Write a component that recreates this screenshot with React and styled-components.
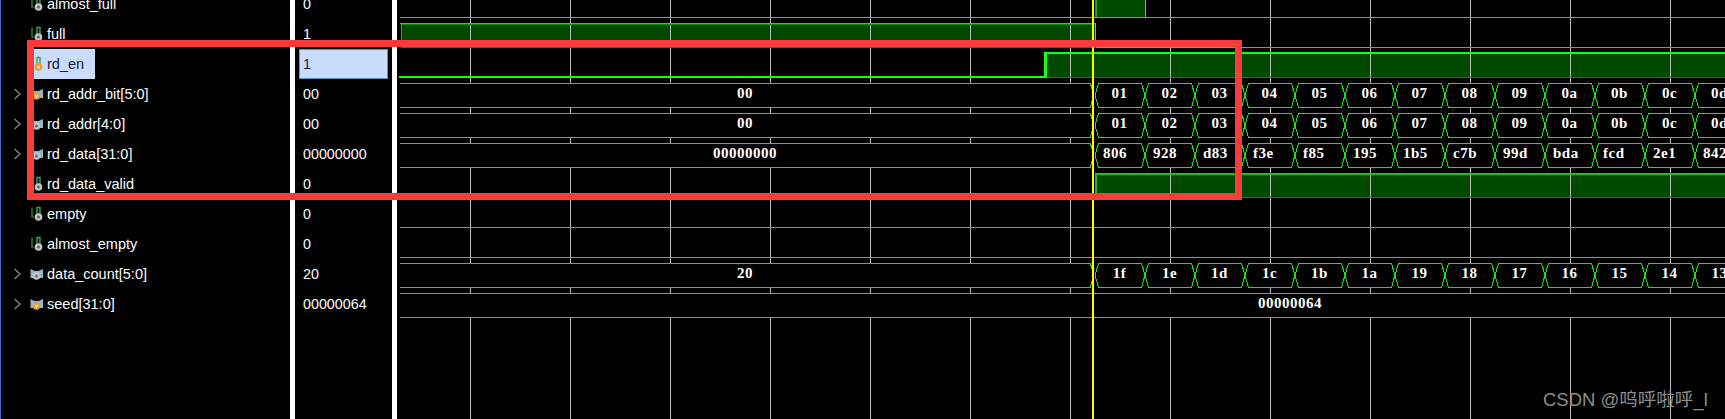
import React from 'react';
import styled, { createGlobalStyle } from 'styled-components';

const GlobalStyle = createGlobalStyle`
    html, body {
        margin: 0;
        padding: 0;
        background: #000;
    }
`;

const Page = styled.div`
    position: relative;
    display: flex;
    width: 1725px;
    height: 419px;
    overflow: hidden;
    background: #000;
    font-family: 'Liberation Sans', Arial, sans-serif;
    font-size: 14.5px;
`;

const NameColumn = styled.div`
    width: 289px;
    border-left: 1px solid #3f6fc0;
    margin-top: -11px;
    height: 430px;
`;

const ValueColumn = styled.div`
    width: 97px;
    margin-top: -11px;
    height: 430px;
    font-size: 14.3px;
`;

const Divider = styled.div`
    width: 5px;
    background: #fff;
`;

const NameRow = styled.div`
    display: flex;
    align-items: stretch;
    height: 30px;
`;

const Expander = styled.div`
    width: 29px;
    flex: none;
    display: flex;
    align-items: center;
    padding-left: 12px;
    box-sizing: border-box;
`;

const NameCell = styled.div`
    display: flex;
    align-items: center;
    padding-right: 11px;
    color: ${(p) => (p.$selected ? '#10203a' : '#fbfdff')};
    background: ${(p) => (p.$selected ? '#cbdcfb' : 'transparent')};
`;

const IconSlot = styled.div`
    width: 17px;
    height: 16px;
    flex: none;
    display: flex;
    align-items: center;
`;

const ValueRow = styled.div`
    height: 30px;
    padding: 0 4px;
    display: flex;
    align-items: center;
`;

const ValueText = styled.div`
    flex: 1;
    align-self: stretch;
    display: flex;
    align-items: center;
    padding-left: 3px;
    box-sizing: border-box;
    color: ${(p) => (p.$selected ? '#10203a' : '#fbfdff')};
    background: ${(p) => (p.$selected ? '#c9dcff' : 'transparent')};
    border: 1px solid ${(p) => (p.$selected ? '#5b95cf' : 'transparent')};
`;

const WavePanel = styled.div`
    flex: 1;
    overflow: hidden;
`;

const WaveSvg = styled.svg`
    display: block;
    shape-rendering: crispEdges;
`;

const BusLabel = styled.text`
    font-family: 'Liberation Serif', 'Times New Roman', serif;
    font-weight: 700;
    font-size: 15px;
    letter-spacing: 0.5px;
    fill: #fff;
    text-anchor: ${(p) => p.$anchor || 'middle'};
`;

const RedFrame = styled.div`
    position: absolute;
    left: 27px;
    top: 40px;
    width: 1215px;
    height: 160px;
    box-sizing: border-box;
    border: 7px solid #fb3a3a;
`;

const Watermark = styled.div`
    position: absolute;
    left: 1543px;
    top: 389px;
    font-family: 'Liberation Sans', 'Noto Sans CJK SC', sans-serif;
    font-size: 18.5px;
    line-height: 22px;
    color: #8c8c8c;
    white-space: nowrap;
`;

const Chevron = () => (
    <svg width="9" height="12" viewBox="0 0 9 12">
        <path d="M1.5 1 L7 6 L1.5 11" fill="none" stroke="#7f7f7f" strokeWidth="1.4" />
    </svg>
);

const Badge = ({ cx, cy, kind }) =>
    kind === 'v' ? (
        <g>
            <circle cx={cx} cy={cy} r="3.8" fill="#ee9a2c" />
            <path d={`M${cx - 1.4} ${cy - 1.3} L${cx} ${cy + 1.6} L${cx + 1.4} ${cy - 1.3}`} fill="none" stroke="#fff" strokeWidth="0.9" />
        </g>
    ) : (
        <g>
            <circle cx={cx} cy={cy} r="3.8" fill="#c4c4c4" />
            <circle cx={cx} cy={cy} r="1.5" fill="#6a6a6a" />
        </g>
    );

const ScalarIcon = ({ kind }) => (
    <svg width="14" height="16" viewBox="0 0 14 16">
        <path d="M2 1.5 V11 H4" fill="none" stroke="#1f7a33" strokeWidth="1.6" />
        <path d="M7 9 V1.5 H10 V9" fill="none" stroke="#35a84a" strokeWidth="1.4" />
        <Badge cx={8.5} cy={11} kind={kind} />
    </svg>
);

const BusIcon = ({ kind }) => (
    <svg width="14" height="16" viewBox="0 0 14 16">
        <path d="M0.5 3 L4.5 5 L8.5 5 L13 3 L13 12 L0.5 12 Z" fill="#8fb8d0" />
        <Badge cx={6.5} cy={10} kind={kind} />
    </svg>
);

const signals = [
    { name: 'almost_full', value: '0' },
    { name: 'full', value: '1' },
    { name: 'rd_en', value: '1', badge: 'v', selected: true },
    { name: 'rd_addr_bit[5:0]', value: '00', bus: true, badge: 'v' },
    { name: 'rd_addr[4:0]', value: '00', bus: true },
    { name: 'rd_data[31:0]', value: '00000000', bus: true },
    { name: 'rd_data_valid', value: '0' },
    { name: 'empty', value: '0' },
    { name: 'almost_empty', value: '0' },
    { name: 'data_count[5:0]', value: '20', bus: true },
    { name: 'seed[31:0]', value: '00000064', bus: true, badge: 'v' },
];

// the panel starts at x=397, wave coordinates below are page x
const PANEL_X = 397;
const GREEN = '#14e614';
const BRIGHT = '#12ff12';
const DIM = '#0b8a0b';
const FILL = '#004a00';
const EDGE = 1095; // first value change
const END = 1760;

const rowTop = (i) => -7 + 30 * i; // top line of signal i
const gridXs = [470, 570, 670, 770, 870, 970, 1070, 1170, 1270, 1370, 1470, 1570, 1670];

const addrCells = ['01', '02', '03', '04', '05', '06', '07', '08', '09', '0a', '0b', '0c', '0d'];
const dataCells = ['806', '928', 'd83', 'f3e', 'f85', '195', '1b5', 'c7b', '99d', 'bda', 'fcd', '2e1', '842'];
const countCells = ['1f', '1e', '1d', '1c', '1b', '1a', '19', '18', '17', '16', '15', '14', '13'];

const Hline = ({ x1, x2, y, color = GREEN, h = 1 }) => (
    <rect x={x1} y={y} width={x2 - x1} height={h} fill={color} />
);

const BusRow = ({ row, first, cells, truncated }) => {
    const top = rowTop(row);
    const mid = top + 12;
    const bottom = top + 24;
    return (
        <g>
            <rect x={400} y={top} width={END - 400} height={24} fill="#000" />
            <path
                d={`M400 ${top + 0.5} H1090.5 L1093.5 ${mid} L1090.5 ${bottom + 0.5} H400`}
                fill="none"
                stroke={GREEN}
            />
            <BusLabel x={745} y={mid + 3}>{first}</BusLabel>
            {cells.map((label, i) => {
                const x0 = EDGE + 50 * i;
                return (
                    <g key={label}>
                        <path
                            d={`M${x0} ${mid} L${x0 + 3.5} ${top + 0.5} H${x0 + 46.5} L${x0 + 50} ${mid} L${x0 + 46.5} ${bottom + 0.5} H${x0 + 3.5} Z`}
                            fill="none"
                            stroke={GREEN}
                        />
                        {truncated ? (
                            <BusLabel x={x0 + 8} y={mid + 3} $anchor="start">{label}</BusLabel>
                        ) : (
                            <BusLabel x={x0 + 24.5} y={mid + 3}>{label}</BusLabel>
                        )}
                    </g>
                );
            })}
        </g>
    );
};

const Waves = () => (
    <WaveSvg width={1725 - PANEL_X} height={419} viewBox={`${PANEL_X} 0 ${1725 - PANEL_X} 419`}>
        {/* green fills sit under the grid */}
        <rect x={1096} y={0} width={50} height={17} fill={FILL} />
        <rect x={401} y={24} width={695} height={23} fill={FILL} />
        <rect x={1047} y={54} width={END - 1047} height={23} fill={FILL} />
        <rect x={1096} y={174} width={END - 1096} height={23} fill={FILL} />

        {gridXs.map((x) => (
            <rect key={x} x={x} y={0} width={1} height={419} fill="#bdbdbd" />
        ))}

        {/* almost_full */}
        <Hline x1={400} x2={END} y={17} />
        <rect x={1095} y={0} width={2} height={17} fill={GREEN} opacity="0.7" />
        <rect x={1145} y={0} width={1} height={17} fill={BRIGHT} />

        {/* full */}
        <Hline x1={400} x2={1096} y={23} />
        <Hline x1={401} x2={1096} y={24} color={DIM} />
        <rect x={401} y={24} width={1} height={23} fill={GREEN} opacity="0.7" />
        <rect x={1095} y={23} width={1} height={24} fill={BRIGHT} />
        <Hline x1={401} x2={1096} y={47} color={DIM} />
        <Hline x1={1096} x2={END} y={47} />

        {/* rd_en */}
        <Hline x1={399} x2={1046} y={76} color={BRIGHT} h={2} />
        <rect x={1044} y={52} width={3} height={26} fill={BRIGHT} />
        <Hline x1={1044} x2={END} y={52} color={BRIGHT} h={2} />
        <Hline x1={1047} x2={END} y={77} color={DIM} />

        <BusRow row={3} first="00" cells={addrCells} />
        <BusRow row={4} first="00" cells={addrCells} />
        <BusRow row={5} first="00000000" cells={dataCells} truncated />

        {/* rd_data_valid */}
        <Hline x1={400} x2={1095} y={197} />
        <rect x={1095} y={173} width={2} height={24} fill={GREEN} opacity="0.8" />
        <Hline x1={1095} x2={END} y={173} color="#10c810" h={2} />
        <Hline x1={1097} x2={END} y={197} color={DIM} />

        {/* empty, almost_empty */}
        <Hline x1={400} x2={END} y={227} />
        <Hline x1={400} x2={END} y={257} />

        <BusRow row={9} first="20" cells={countCells} />

        {/* seed */}
        <rect x={400} y={293} width={END - 400} height={24} fill="#000" />
        <Hline x1={400} x2={END} y={293} />
        <Hline x1={400} x2={END} y={317} />
        <BusLabel x={1290} y={308}>00000064</BusLabel>

        {/* cursor */}
        <rect x={1092} y={0} width={2} height={419} fill="#ffff00" />
    </WaveSvg>
);

export default function App() {
    return (
        <Page>
            <GlobalStyle />
            <NameColumn>
                {signals.map((s) => (
                    <NameRow key={s.name}>
                        <Expander>{s.bus && <Chevron />}</Expander>
                        <NameCell $selected={s.selected}>
                            <IconSlot>
                                {s.bus ? <BusIcon kind={s.badge} /> : <ScalarIcon kind={s.badge} />}
                            </IconSlot>
                            {s.name}
                        </NameCell>
                    </NameRow>
                ))}
            </NameColumn>
            <Divider />
            <ValueColumn>
                {signals.map((s) => (
                    <ValueRow key={s.name}>
                        <ValueText $selected={s.selected}>{s.value}</ValueText>
                    </ValueRow>
                ))}
            </ValueColumn>
            <Divider />
            <WavePanel>
                <Waves />
            </WavePanel>
            <RedFrame />
            <Watermark>CSDN @呜呼啦呼_l</Watermark>
        </Page>
    );
}
